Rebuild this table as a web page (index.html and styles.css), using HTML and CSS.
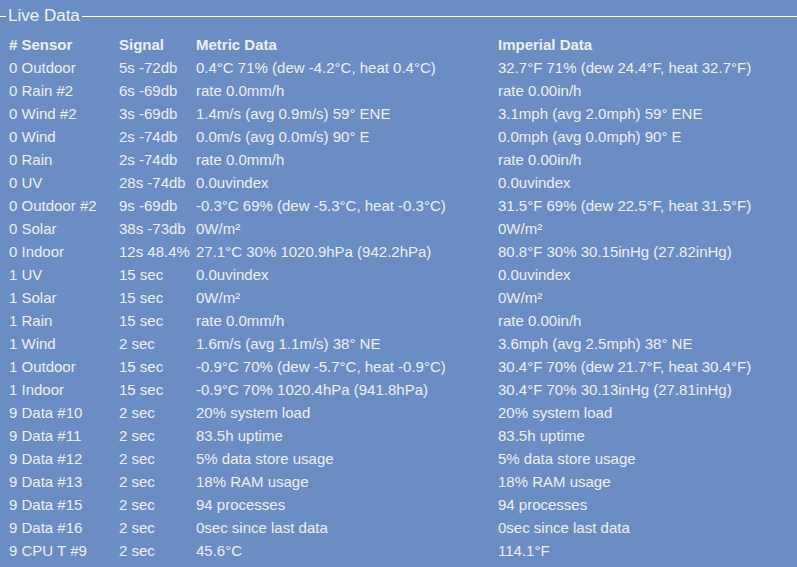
FILE: index.html
```html
<!DOCTYPE html>
<html>
<head>
<meta charset="utf-8">
<link rel="stylesheet" href="styles.css">
</head>
<body>
<fieldset class="live">
<legend class="live-title">Live Data</legend>
<table class="data">
<colgroup><col class="c-sensor"><col class="c-signal"><col class="c-metric"><col class="c-imperial"></colgroup>
<thead>
<tr><th># Sensor</th><th>Signal</th><th>Metric Data</th><th>Imperial Data</th></tr>
</thead>
<tbody>
<tr><td>0 Outdoor</td><td>5s -72db</td><td>0.4°C 71% (dew -4.2°C, heat 0.4°C)</td><td>32.7°F 71% (dew 24.4°F, heat 32.7°F)</td></tr>
<tr><td>0 Rain #2</td><td>6s -69db</td><td>rate 0.0mm/h</td><td>rate 0.00in/h</td></tr>
<tr><td>0 Wind #2</td><td>3s -69db</td><td>1.4m/s (avg 0.9m/s) 59° ENE</td><td>3.1mph (avg 2.0mph) 59° ENE</td></tr>
<tr><td>0 Wind</td><td>2s -74db</td><td>0.0m/s (avg 0.0m/s) 90° E</td><td>0.0mph (avg 0.0mph) 90° E</td></tr>
<tr><td>0 Rain</td><td>2s -74db</td><td>rate 0.0mm/h</td><td>rate 0.00in/h</td></tr>
<tr><td>0 UV</td><td>28s -74db</td><td>0.0uvindex</td><td>0.0uvindex</td></tr>
<tr><td>0 Outdoor #2</td><td>9s -69db</td><td>-0.3°C 69% (dew -5.3°C, heat -0.3°C)</td><td>31.5°F 69% (dew 22.5°F, heat 31.5°F)</td></tr>
<tr><td>0 Solar</td><td>38s -73db</td><td>0W/m²</td><td>0W/m²</td></tr>
<tr><td>0 Indoor</td><td>12s 48.4%</td><td>27.1°C 30% 1020.9hPa (942.2hPa)</td><td>80.8°F 30% 30.15inHg (27.82inHg)</td></tr>
<tr><td>1 UV</td><td>15 sec</td><td>0.0uvindex</td><td>0.0uvindex</td></tr>
<tr><td>1 Solar</td><td>15 sec</td><td>0W/m²</td><td>0W/m²</td></tr>
<tr><td>1 Rain</td><td>15 sec</td><td>rate 0.0mm/h</td><td>rate 0.00in/h</td></tr>
<tr><td>1 Wind</td><td>2 sec</td><td>1.6m/s (avg 1.1m/s) 38° NE</td><td>3.6mph (avg 2.5mph) 38° NE</td></tr>
<tr><td>1 Outdoor</td><td>15 sec</td><td>-0.9°C 70% (dew -5.7°C, heat -0.9°C)</td><td>30.4°F 70% (dew 21.7°F, heat 30.4°F)</td></tr>
<tr><td>1 Indoor</td><td>15 sec</td><td>-0.9°C 70% 1020.4hPa (941.8hPa)</td><td>30.4°F 70% 30.13inHg (27.81inHg)</td></tr>
<tr><td>9 Data #10</td><td>2 sec</td><td>20% system load</td><td>20% system load</td></tr>
<tr><td>9 Data #11</td><td>2 sec</td><td>83.5h uptime</td><td>83.5h uptime</td></tr>
<tr><td>9 Data #12</td><td>2 sec</td><td>5% data store usage</td><td>5% data store usage</td></tr>
<tr><td>9 Data #13</td><td>2 sec</td><td>18% RAM usage</td><td>18% RAM usage</td></tr>
<tr><td>9 Data #15</td><td>2 sec</td><td>94 processes</td><td>94 processes</td></tr>
<tr><td>9 Data #16</td><td>2 sec</td><td>0sec since last data</td><td>0sec since last data</td></tr>
<tr><td>9 CPU T #9</td><td>2 sec</td><td>45.6°C</td><td>114.1°F</td></tr>
</tbody>
</table>
</fieldset>
</body>
</html>
```
FILE: styles.css
```css
html, body {
  margin: 0;
  padding: 0;
  background: #6a8ec3;
  color: #f0f0f0;
  font-family: "Liberation Sans", Arial, sans-serif;
}
.live {
  margin: 7px 0 0 0;
  padding: 8px 5px 0 5px;
  border: 0;
  border-top: 1px solid #ffffff;
}
.live-title {
  margin-left: 1px;
  padding: 0 2px;
  font-size: 17px;
  line-height: 18px;
  color: #f4f4f4;
}
.data {
  border-collapse: collapse;
  table-layout: fixed;
  width: 100%;
  font-size: 15px;
}
.c-sensor { width: 110px; }
.c-signal { width: 77px; }
.c-metric { width: 302px; }
.data th, .data td {
  padding: 0 4px;
  height: 23px;
  text-align: left;
  white-space: nowrap;
  vertical-align: middle;
}
.data th {
  font-weight: bold;
}
```
